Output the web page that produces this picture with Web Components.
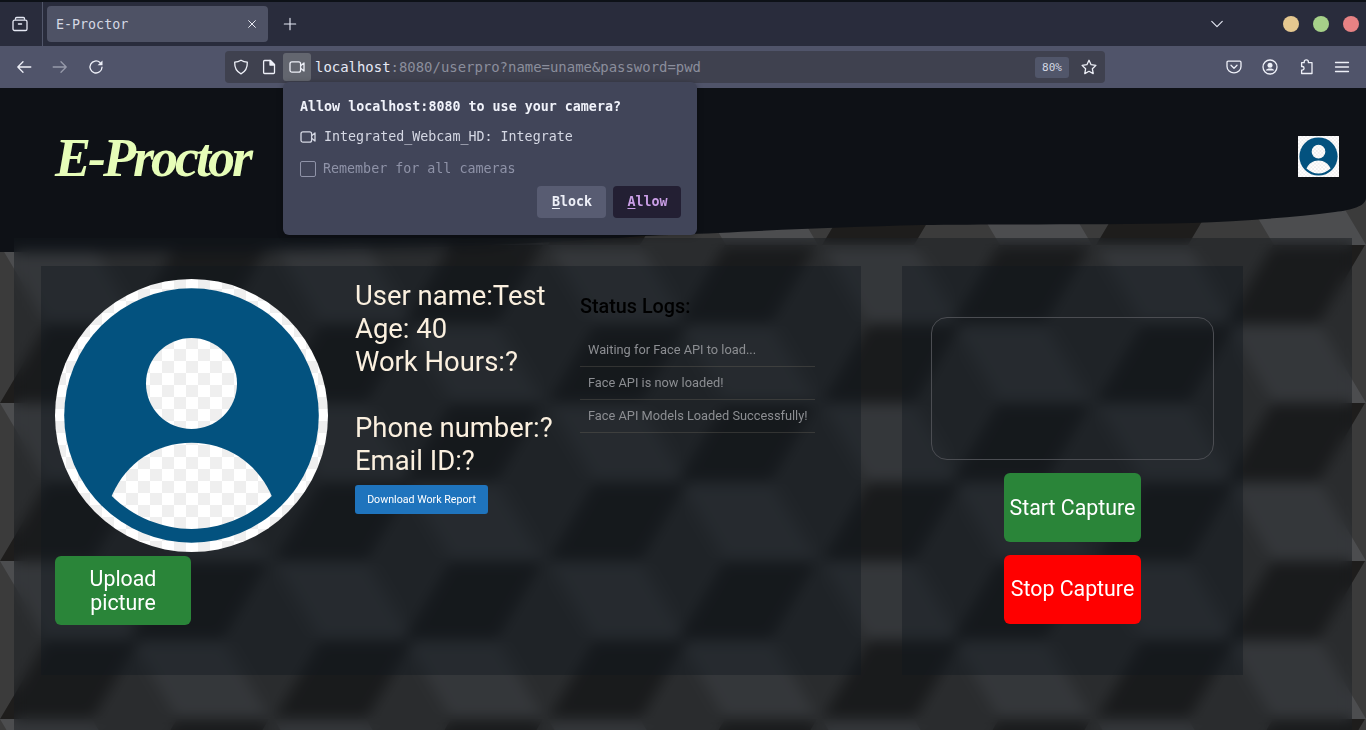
<!DOCTYPE html>
<html lang="en">
<head>
<meta charset="utf-8">
<title>E-Proctor</title>
<style>
    html, body { margin: 0; height: 730px; overflow: hidden; background: #0e1116; }
</style>
</head>
<body>
<app-shell>
    <browser-tabs slot="chrome"></browser-tabs>
    <browser-toolbar slot="chrome"></browser-toolbar>
    <permission-popup slot="popup"></permission-popup>
    <site-page></site-page>
</app-shell>

<script>
// iconos de la barra del navegador
const ICONS = {
    view: '<path d="M3.5 3.2V2.6c0-.6.5-1.1 1.1-1.1h6.8c.6 0 1.1.5 1.1 1.1v.6"/><rect x="1" y="4.2" width="14" height="10.3" rx="1.6"/><path d="M6.4 8h3.2"/>',
    close: '<path d="M3.5 3.5l9 9M12.5 3.5l-9 9"/>',
    plus: '<path d="M8 1.5v13M1.5 8h13"/>',
    back: '<path d="M14.8 8H1.8M7 2.8L1.8 8 7 13.2"/>',
    reload: '<path d="M14 8.2a6 6 0 1 1-2-4.7"/><path d="M14.5 1.4v4.9H9.6z" fill="currentColor" stroke="none"/>',
    shield: '<path d="M8 1.2c1.8 1.1 3.8 1.8 6.3 2 .2 5.2-1.6 9.2-6.3 11.6C3.300 12.400 1.500 8.400 1.700 3.200c2.500-.2 4.500-.9 6.300-2z"/>',
    doc: '<path d="M3.600 1.500h5.900L13.500 5.500v8a1 1 0 0 1-1 1h-8.900a1 1 0 0 1-1-1v-11a1 1 0 0 1 1-1z"/><path d="M9 1.500v4.500h4.500z" fill="currentColor"/>',
    camera: '<rect x="1" y="2.800" width="10.600" height="10.400" rx="2"/><path d="M11.600 6.800L15 4v8l-3.400-2.800"/>',
    star: '<path d="M8 1.300l2.100 4.400 4.800.7-3.500 3.400.8 4.800L8 12.300l-4.200 2.300.8-4.800L1.100 6.400l4.800-.7z"/>',
    pocket: '<path d="M2.200 2.200h11.600c.7 0 1.200.5 1.200 1.200v4.100c0 3.600-3.100 6.300-7 6.300s-7-2.700-7-6.300V3.400c0-.7.5-1.200 1.200-1.200z"/><path d="M5 6.300l3 3 3-3"/>',
    account: '<circle cx="8" cy="8" r="7"/><circle cx="8" cy="6.300" r="2.500" fill="currentColor" stroke="none"/><path d="M3.800 11.400c.6-1.300 2-1.900 4.200-1.900s3.600.6 4.200 1.900z" fill="currentColor" stroke="none"/>',
    extension: '<path d="M6.200 3.700V3a2.100 2.100 0 0 1 4.200 0v.7H14v10.800H3.600v-3.400h.7a1.800 1.800 0 0 0 0-3.600h-.7V3.700z"/>',
    menu: '<path d="M1.500 3.500h13M1.500 8h13M1.500 12.500h13"/>',
    chevron: '<path d="M2 5l6 6 6-6"/>'
};

class UiIcon extends HTMLElement {
    constructor() {
        super();
        this.attachShadow({ mode: 'open' });
        const size = this.getAttribute('size') || 16;
        const name = this.getAttribute('name');
        this.shadowRoot.innerHTML = `
            <style>
                :host { display: inline-flex; width: ${size}px; height: ${size}px; flex: none; }
                svg { width: 100%; height: 100%; display: block; fill: none; stroke: currentColor; stroke-width: 1.3; stroke-linejoin: round; stroke-linecap: round; }
            </style>
            <svg viewBox="0 0 16 16">${ICONS[name] || ''}</svg>
        `;
    }
}
customElements.define('ui-icon', UiIcon);

class AppShell extends HTMLElement {
    constructor() {
        super();
        this.attachShadow({ mode: 'open' });
        this.shadowRoot.innerHTML = `
            <style>
                :host { display: flex; flex-direction: column; position: relative; width: 1366px; height: 730px; overflow: hidden; font-family: Roboto, sans-serif; }
                .page { flex: 1; min-height: 0; }
            </style>
            <slot name="chrome"></slot>
            <div class="page"><slot></slot></div>
            <slot name="popup"></slot>
        `;
    }
}
customElements.define('app-shell', AppShell);

class BrowserTabs extends HTMLElement {
    constructor() {
        super();
        this.attachShadow({ mode: 'open' });
        this.shadowRoot.innerHTML = `
            <style>
                :host { display: flex; align-items: center; box-sizing: border-box; height: 46px; border-top: 2px solid #0d1117; background: #292c3c; color: #e6e9f5; font: 13.33px "DejaVu Sans Mono", monospace; }
                .view { display: flex; align-items: center; justify-content: center; width: 43px; height: 100%; padding-right: 3px; border-right: 1px solid #51566a; box-sizing: border-box; margin-right: 4px; }
                .tab { display: flex; align-items: center; justify-content: space-between; box-sizing: border-box; width: 221px; height: 36px; padding: 0 10px 0 9px; background: #4e5265; border-radius: 4px; color: #d5d8e4; }
                .tab ui-icon { color: #eef0f8; }
                .new { margin-left: 15px; }
                .spacer { flex: 1; }
                .dots { display: flex; gap: 14px; margin-left: 59px; margin-right: 7px; }
                .dots i { width: 16px; height: 16px; border-radius: 50%; }
            </style>
            <div class="view"><ui-icon name="view"></ui-icon></div>
            <div class="tab"><span>E-Proctor</span><ui-icon name="close" size="12"></ui-icon></div>
            <ui-icon class="new" name="plus" size="14"></ui-icon>
            <div class="spacer"></div>
            <ui-icon name="chevron" size="14"></ui-icon>
            <div class="dots">
                <i style="background:#e5c890"></i><i style="background:#a6d189"></i><i style="background:#e78284"></i>
            </div>
        `;
    }
}
customElements.define('browser-tabs', BrowserTabs);

class BrowserToolbar extends HTMLElement {
    constructor() {
        super();
        this.attachShadow({ mode: 'open' });
        this.shadowRoot.innerHTML = `
            <style>
                :host { display: flex; align-items: center; box-sizing: border-box; height: 42px; padding: 0 0 0 16px; background: #50546a; color: #eef0f8; font: 13.95px "DejaVu Sans Mono", monospace; }
                .nav { display: flex; gap: 20px; width: 209px; }
                .dim { opacity: .45; }
                .url { display: flex; align-items: center; box-sizing: border-box; width: 880px; height: 32px; padding: 0 8px; background: #3f414f; border-radius: 4px; }
                .url > ui-icon.shield { margin-right: 12px; }
                .url > ui-icon.doc { margin-right: 6px; }
                .cam { display: flex; align-items: center; justify-content: center; width: 28px; height: 28px; margin: 0 4px 0 0; background: #63666f; border-radius: 3px; }
                .addr { flex: 1; color: #8b8e9c; white-space: nowrap; }
                .addr b { font-weight: 400; color: #e6e9f5; }
                .zoom { display: flex; align-items: center; justify-content: center; width: 34px; height: 21px; background: #51566a; border-radius: 3px; color: #d5d8e4; font-size: 11px; margin-right: 12px; }
                .tools { display: flex; align-items: center; gap: 20px; margin-left: 121px; }
            </style>
            <div class="nav">
                <ui-icon name="back"></ui-icon>
                <ui-icon class="dim" name="back" style="transform:scaleX(-1)"></ui-icon>
                <ui-icon name="reload"></ui-icon>
            </div>
            <div class="url">
                <ui-icon class="shield" name="shield"></ui-icon>
                <ui-icon class="doc" name="doc"></ui-icon>
                <div class="cam"><ui-icon name="camera"></ui-icon></div>
                <div class="addr"><b>localhost</b>:8080/userpro?name=uname&amp;password=pwd</div>
                <div class="zoom">80%</div>
                <ui-icon name="star"></ui-icon>
            </div>
            <div class="tools">
                <ui-icon name="pocket"></ui-icon>
                <ui-icon name="account"></ui-icon>
                <ui-icon name="extension"></ui-icon>
                <ui-icon name="menu"></ui-icon>
            </div>
        `;
    }
}
customElements.define('browser-toolbar', BrowserToolbar);

class PermissionPopup extends HTMLElement {
    constructor() {
        super();
        this.attachShadow({ mode: 'open' });
        this.shadowRoot.innerHTML = `
            <style>
                :host { position: absolute; left: 283px; top: 82px; display: block; box-sizing: border-box; width: 414px; height: 153px; padding: 17px 16px 0 17px; background: #414559; border-radius: 6px; color: #e6e9f5; font: 13.33px/16px "DejaVu Sans Mono", monospace; box-shadow: 0 1px 6px rgba(0,0,0,.3); z-index: 5; }
                .title { font-weight: 700; color: #f0f2fa; }
                .device { display: flex; align-items: center; gap: 8px; margin-top: 14px; color: #d5d8e4; }
                .remember { display: flex; align-items: center; gap: 7px; margin-top: 16px; color: #8f93a8; }
                .box { width: 14px; height: 14px; border: 1px solid #8f93a8; border-radius: 2px; }
                .actions { display: flex; justify-content: flex-end; gap: 7px; margin-top: 9px; }
                button { font: inherit; font-weight: 700; height: 32px; border: 0; border-radius: 4px; padding: 0 0 0 1px; }
                .block { width: 69px; background: #585c72; color: #eef0f8; }
                .allow { width: 68px; background: #231f33; color: #ca9ee6; }
                u { text-underline-offset: 2px; }
            </style>
            <div class="title">Allow localhost:8080 to use your camera?</div>
            <div class="device"><ui-icon name="camera"></ui-icon><span>Integrated_Webcam_HD: Integrate</span></div>
            <div class="remember"><span class="box"></span><span>Remember for all cameras</span></div>
            <div class="actions">
                <button class="block"><u>B</u>lock</button>
                <button class="allow"><u>A</u>llow</button>
            </div>
        `;
    }
}
customElements.define('permission-popup', PermissionPopup);

class UserAvatar extends HTMLElement {
    constructor() {
        super();
        this.attachShadow({ mode: 'open' });
        const size = this.getAttribute('size') || 273;
        const round = this.hasAttribute('round');
        this.shadowRoot.innerHTML = `
            <style>
                :host { display: block; flex: none; width: ${size}px; height: ${size}px; ${round ? 'border-radius: 50%; overflow: hidden;' : ''} }
                svg { display: block; width: 100%; height: 100%; }
            </style>
            <svg viewBox="0 0 273 273">
                <defs>
                    <pattern id="check" width="24" height="24" patternUnits="userSpaceOnUse" x="-1" y="-2">
                        <rect width="24" height="24" fill="#fff"/>
                        <rect width="12" height="12" fill="#efefef"/>
                        <rect x="12" y="12" width="12" height="12" fill="#efefef"/>
                    </pattern>
                </defs>
                <rect width="273" height="273" fill="url(#check)"/>
                <circle cx="136.500" cy="136.500" r="127.300" fill="#03527f"/>
                <circle cx="136.500" cy="104.500" r="45.500" fill="url(#check)"/>
                <path d="M56.700 217C70 185 100 163.700 136.500 163.700S203 185 216.700 217C195 238 165 250 136.500 250S78 238 56.700 217Z" fill="url(#check)"/>
            </svg>
        `;
    }
}
customElements.define('user-avatar', UserAvatar);

class ActionButton extends HTMLElement {
    constructor() {
        super();
        this.attachShadow({ mode: 'open' });
        this.shadowRoot.innerHTML = `
            <style>
                :host { display: flex; align-items: center; justify-content: center; flex: none; box-sizing: border-box; width: 137px; height: 69px; padding: 0 2px; background: #2a8539; border-radius: 6px; color: #fff; font: 400 21.33px/24px Roboto, sans-serif; text-align: center; }
                :host([kind="stop"]) { background: #ff0000; padding-bottom: 2px; }
                :host([small]) { width: 133px; height: 29px; background: #1f74bd; border-radius: 3px; font-size: 10.67px; line-height: 14px; }
            </style>
            <slot></slot>
        `;
    }
}
customElements.define('action-button', ActionButton);

class StatusLogs extends HTMLElement {
    constructor() {
        super();
        this.attachShadow({ mode: 'open' });
        this.shadowRoot.innerHTML = `
            <style>
                :host { display: block; width: 235px; padding-top: 15px; }
                h2 { margin: 0 0 14px; font: 500 19.8px/26px Roboto, sans-serif; color: #000; }
                ul { list-style: none; margin: 0; padding: 0; }
                li { box-sizing: border-box; height: 33px; padding: 0 8px; font: 400 12.8px/32px Roboto, sans-serif; color: #8c8e92; border-bottom: 1px solid rgba(120,112,100,.3); white-space: nowrap; }
            </style>
            <h2>Status Logs:</h2>
            <ul>
                <li>Waiting for Face API to load...</li>
                <li>Face API is now loaded!</li>
                <li>Face API Models Loaded Successfully!</li>
            </ul>
        `;
    }
}
customElements.define('status-logs', StatusLogs);

class ProfileCard extends HTMLElement {
    constructor() {
        super();
        this.attachShadow({ mode: 'open' });
        this.shadowRoot.innerHTML = `
            <style>
                :host { display: flex; box-sizing: border-box; width: 820px; height: 409px; padding: 13px 0 0 14px; background: rgba(18,23,30,.4); }
                .photo { display: flex; flex-direction: column; gap: 4px; width: 273px; margin-right: 27px; }
                .photo action-button { width: 136px; }
                .info { display: flex; flex-direction: column; align-items: flex-start; width: 225px; padding-top: 1px; color: #fbf0df; font: 400 27.43px/33px Roboto, sans-serif; white-space: nowrap; }
                .info p { margin: 0; }
                .info action-button { margin-top: 7px; }
            </style>
            <div class="photo">
                <user-avatar round></user-avatar>
                <action-button>Upload picture</action-button>
            </div>
            <div class="info">
                <p>User name:Test</p>
                <p>Age: 40</p>
                <p>Work Hours:?</p>
                <p>&nbsp;</p>
                <p>Phone number:?</p>
                <p>Email ID:?</p>
                <action-button small>Download Work Report</action-button>
            </div>
            <status-logs></status-logs>
        `;
    }
}
customElements.define('profile-card', ProfileCard);

class CaptureCard extends HTMLElement {
    constructor() {
        super();
        this.attachShadow({ mode: 'open' });
        this.shadowRoot.innerHTML = `
            <style>
                :host { display: flex; flex-direction: column; align-items: center; gap: 13px; box-sizing: border-box; width: 341px; height: 409px; padding-top: 51px; background: rgba(18,23,30,.4); }
                .video { box-sizing: border-box; width: 283px; height: 143px; border: 1px solid #4b4d52; border-radius: 16px; }
            </style>
            <div class="video"></div>
            <action-button>Start Capture</action-button>
            <action-button kind="stop">Stop Capture</action-button>
        `;
    }
}
customElements.define('capture-card', CaptureCard);

// fondo de cubos: losetas de 274x158
const TILE = `<svg xmlns='http://www.w3.org/2000/svg' width='274' height='158'><rect width='274' height='158' fill='#3b3b3b'/><path d='M0 0H92L139 79H47Z M131 79H223L270 158H178Z' fill='#4c4d4f'/><path d='M177 0H269L222 79H130Z M47 79H139L92 158H0Z' fill='#1e1d1c'/></svg>`;

class SitePage extends HTMLElement {
    constructor() {
        super();
        this.attachShadow({ mode: 'open' });
        this.shadowRoot.innerHTML = `
            <style>
                :host { display: block; height: 642px; background: url("data:image/svg+xml,${encodeURIComponent(TILE)}") 0 -1px / 274px 158px; }
                header { display: flex; justify-content: space-between; box-sizing: border-box; height: 164px; padding: 48px 27px 0 55px; background: #0e1116; clip-path: path('M0 0H1366V110C1366 118 1352 122 1335 124C1290 130 1240 133 1191 135C1100 137 1000 136 921 137C850 139 790 141 718 145C690 146 665 147 642 148C500 160 300 164 0 164Z'); }
                .logo { color: #e6fdb8; font: italic 700 54px/44px "Liberation Serif", serif; letter-spacing: -3px; }
                .glass { box-sizing: border-box; display: flex; gap: 41px; height: 492px; margin: -14px 14px 0; padding: 28px 0 0 27px; background: rgba(20,24,30,.41); backdrop-filter: blur(7px); }
            </style>
            <header>
                <div class="logo">E-Proctor</div>
                <user-avatar size="41"></user-avatar>
            </header>
            <div class="glass">
                <profile-card></profile-card>
                <capture-card></capture-card>
            </div>
        `;
    }
}
customElements.define('site-page', SitePage);
</script>
</body>
</html>
